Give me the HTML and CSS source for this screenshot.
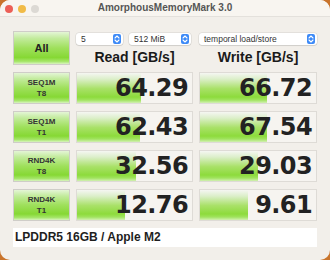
FILE: index.html
```html
<!DOCTYPE html>
<html>
<head>
<meta charset="utf-8">
<link rel="stylesheet" href="styles.css">
</head>
<body>
<div class="window">
  <div class="titlebar">
    <div class="lights"><span class="dot red"></span><span class="dot yellow"></span><span class="dot gray"></span></div>
    <div class="title">AmorphousMemoryMark 3.0</div>
  </div>
  <div class="content">
    <div class="grid">
      <div class="btn btn-all">All</div>
      <div class="head">
        <div class="selects">
          <div class="select s-count"><span>5</span><i class="step"><svg viewBox="0 0 8 10" width="8" height="10"><path d="M2 4 L4 2 L6 4 M2 6 L4 8 L6 6" fill="none" stroke="#fff" stroke-width="1.1" stroke-linecap="round" stroke-linejoin="round"/></svg></i></div>
          <div class="select s-size"><span>512 MiB</span><i class="step"><svg viewBox="0 0 8 10" width="8" height="10"><path d="M2 4 L4 2 L6 4 M2 6 L4 8 L6 6" fill="none" stroke="#fff" stroke-width="1.1" stroke-linecap="round" stroke-linejoin="round"/></svg></i></div>
        </div>
        <div class="colhead">Read [GB/s]</div>
      </div>
      <div class="head">
        <div class="selects">
          <div class="select s-mode"><span>temporal load/store</span><i class="step"><svg viewBox="0 0 8 10" width="8" height="10"><path d="M2 4 L4 2 L6 4 M2 6 L4 8 L6 6" fill="none" stroke="#fff" stroke-width="1.1" stroke-linecap="round" stroke-linejoin="round"/></svg></i></div>
        </div>
        <div class="colhead">Write [GB/s]</div>
      </div>

      <div class="btn btn-test">SEQ1M<br>T8</div>
      <div class="cell"><div class="bar" style="width:56%"></div><div class="num">64.29</div></div>
      <div class="cell"><div class="bar" style="width:58%"></div><div class="num">66.72</div></div>

      <div class="btn btn-test">SEQ1M<br>T1</div>
      <div class="cell"><div class="bar" style="width:55%"></div><div class="num">62.43</div></div>
      <div class="cell"><div class="bar" style="width:58%"></div><div class="num">67.54</div></div>

      <div class="btn btn-test">RND4K<br>T8</div>
      <div class="cell"><div class="bar" style="width:51%"></div><div class="num">32.56</div></div>
      <div class="cell"><div class="bar" style="width:50%"></div><div class="num">29.03</div></div>

      <div class="btn btn-test">RND4K<br>T1</div>
      <div class="cell"><div class="bar" style="width:42%"></div><div class="num">12.76</div></div>
      <div class="cell"><div class="bar" style="width:41%"></div><div class="num">9.61</div></div>
    </div>
    <div class="comment">LPDDR5 16GB / Apple M2</div>
  </div>
</div>
</body>
</html>
```
FILE: styles.css
```css
* { box-sizing: border-box; }
html, body { margin: 0; padding: 0; }
body {
  width: 330px;
  height: 260px;
  background: #c9742c;
  font-family: "Liberation Sans", Arial, sans-serif;
  overflow: hidden;
}
.window {
  width: 330px;
  height: 260px;
  border-radius: 10px;
  background: #f2efea;
  overflow: hidden;
}
.titlebar {
  height: 17px;
  background: #f8f5f0;
  border-bottom: 1px solid #e4e1dc;
  display: flex;
  align-items: center;
  position: relative;
}
.lights {
  display: flex;
  gap: 5px;
  padding-left: 5px;
  padding-top: 1px;
}
.dot {
  width: 8px;
  height: 8px;
  border-radius: 50%;
  display: block;
}
.red { background: #ec5f57; }
.yellow { background: #f1bb47; }
.gray { background: #dcd9d4; }
.title {
  position: absolute;
  left: 0;
  right: 0;
  top: 2px;
  text-align: center;
  font-weight: bold;
  font-size: 10px;
  color: #555;
}
.content {
  padding: 14px 13px 0 13px;
}
.grid {
  display: grid;
  grid-template-columns: 57px 117px 118px;
  grid-template-rows: 34px repeat(4, 32px);
  column-gap: 6px;
  row-gap: 7px;
}
.btn {
  border: 1px solid #cfcdc8;
  background: linear-gradient(to bottom, #e4f5d6 0%, #c2eb9c 20%, #9fe05c 50%, #86d834 80%, #a6e66a 92%, #d9f4c0 100%);
  color: #2e2e2e;
  font-weight: bold;
  text-align: center;
  display: flex;
  align-items: center;
  justify-content: center;
}
.btn-all {
  font-size: 11px;
  color: #222;
}
.btn-test {
  font-size: 8px;
  line-height: 11px;
  color: #333;
}
.head {
  display: flex;
  flex-direction: column;
  align-items: stretch;
  padding-top: 2px;
}
.selects {
  display: flex;
  gap: 6px;
  height: 12px;
}
.select {
  height: 12px;
  background: #fff;
  border-radius: 3px;
  box-shadow: 0 0 0 0.5px rgba(0,0,0,0.12), 0 1px 1px rgba(0,0,0,0.08);
  display: flex;
  align-items: center;
  justify-content: space-between;
  padding: 0 2px 0 5px;
  font-size: 8.5px;
  color: #333;
}
.s-count { width: 47px; }
.s-size { width: 62px; }
.s-mode { width: 118px; }
.step {
  width: 8px;
  height: 10px;
  border-radius: 2px;
  background: #3d8af7;
  display: flex;
  align-items: center;
  justify-content: center;
}
.step svg { display: block; }
.colhead {
  text-align: center;
  font-weight: bold;
  font-size: 14px;
  color: #1a1a1a;
  margin-top: 4px;
}
.cell {
  border: 1px solid #dedbd6;
  background: #f6f4f0;
  display: grid;
}
.bar {
  grid-area: 1 / 1;
  height: 100%;
  background: linear-gradient(to bottom, #f5f6f2 0%, #dcefca 20%, #a9e168 52%, #8ddb3c 80%, #a0e35e 90%, #d2f0b2 100%);
}
.num {
  grid-area: 1 / 1;
  align-self: center;
  text-align: right;
  padding-right: 4px;
  font-family: "DejaVu Sans", sans-serif;
  font-weight: bold;
  font-size: 24px;
  line-height: 24px;
  color: #222;
  letter-spacing: -0.6px;
}
.comment {
  margin-top: 7px;
  height: 19px;
  background: #fff;
  font-weight: bold;
  font-size: 12px;
  line-height: 19px;
  padding-left: 2px;
  color: #1e1e1e;
}
```
